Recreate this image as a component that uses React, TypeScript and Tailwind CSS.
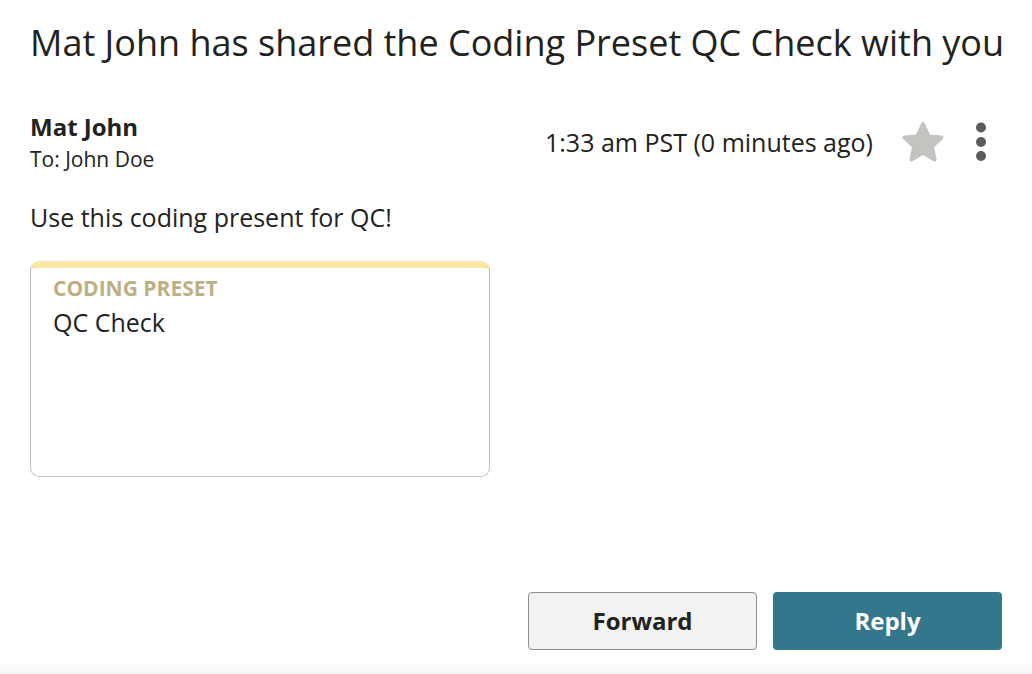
import React from 'react';

const font = { fontFamily: '"Open Sans", "Liberation Sans", sans-serif' };

const StarIcon = () => (
  <svg width="44" height="42" viewBox="0 0 44 42" className="block">
    <polygon
      points="22,3 27.6,15.4 40.5,16.6 30.8,25.4 33.6,38.5 22,31.8 10.4,38.5 13.2,25.4 3.5,16.6 16.4,15.4"
      fill="#c4c3bf"
      stroke="#c4c3bf"
      strokeWidth="4"
      strokeLinejoin="round"
    />
  </svg>
);

const KebabIcon = () => (
  <svg width="12" height="42" viewBox="0 0 12 42" className="block">
    <circle cx="6" cy="6.5" r="5" fill="#5b5b59" />
    <circle cx="6" cy="21" r="5" fill="#5b5b59" />
    <circle cx="6" cy="35" r="5" fill="#5b5b59" />
  </svg>
);

export default function App() {
  return (
    <div style={font} className="h-[674px] flex flex-col bg-white text-[#222220] overflow-hidden">
      <div className="px-[30px] pt-[21px]">
        <h1 className="text-[36px] leading-[44px] font-normal whitespace-nowrap">
          Mat John has shared the Coding Preset QC Check with you
        </h1>

        {/* sender row */}
        <div className="mt-[47px] flex items-center justify-between">
          <div className="flex flex-col">
            <span className="text-[24px] leading-[30px] font-bold">Mat John</span>
            <span className="text-[21px] leading-[24px] mt-[5px]">To: John Doe</span>
          </div>
          <div className="flex items-center">
            <span className="text-[25px] leading-[30px]">1:33 am PST (0 minutes ago)</span>
            <button className="ml-[28px]">
              <StarIcon />
            </button>
            <button className="ml-[30px] mr-[15px]">
              <KebabIcon />
            </button>
          </div>
        </div>

        <p className="mt-[31px] text-[25px] leading-[30px]">Use this coding present for QC!</p>

        {/* preset card */}
        <div className="mt-[29px] w-[460px] h-[216px] rounded-[9px] border border-[#c2c1bc] border-t-[7px] border-t-[#fae6a6] pl-[22px] pt-[8px]">
          <div className="text-[21px] leading-[24px] font-bold text-[#bfb084]">CODING PRESET</div>
          <div className="mt-[7px] text-[25px] leading-[30px]">QC Check</div>
        </div>
      </div>

      <div className="mt-auto bg-gradient-to-b from-white from-[85%] to-[#f4f4f4] px-[30px] pb-[24px] flex justify-end gap-[16px]">
        <button className="w-[229px] h-[58px] rounded-[4px] border border-[#8e8e8c] bg-[#f3f2f0] text-[24px] font-bold text-[#222220]">
          Forward
        </button>
        <button className="w-[229px] h-[58px] rounded-[4px] bg-[#34768b] text-[24px] font-bold text-white">
          Reply
        </button>
      </div>
    </div>
  );
}
